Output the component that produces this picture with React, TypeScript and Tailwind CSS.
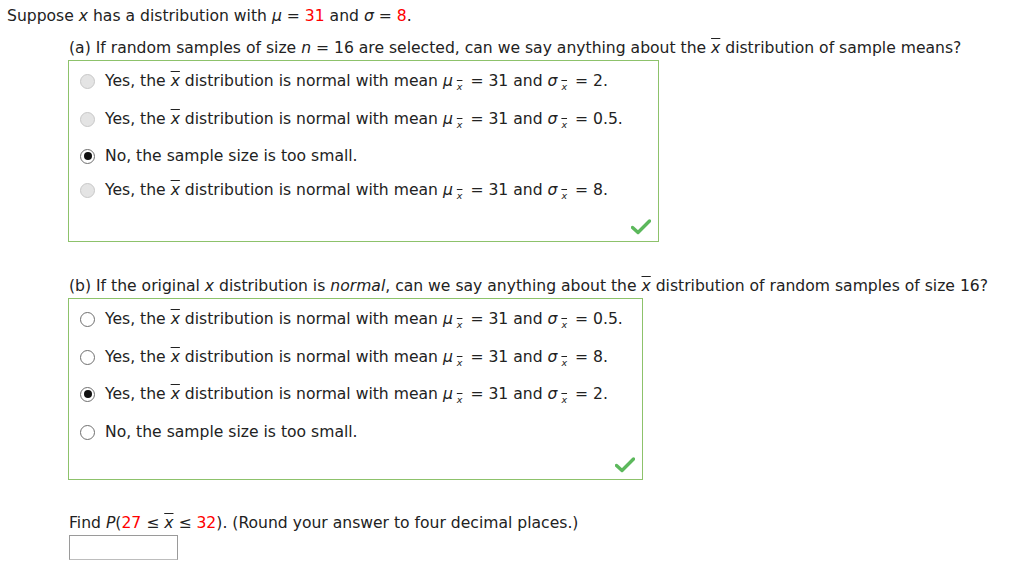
import React from "react";

const Red = ({ children }: { children: React.ReactNode }) => <span className="text-[#ff0000]">{children}</span>;

const XBar = () => <i className="overline decoration-1">x</i>;

const Sub = () => (
  <sub className="text-[9.5px] align-[-2px] ml-[4px] mr-[3px]">
    <i className="overline decoration-1">x</i>
  </sub>
);

const Mean = ({ s }: { s: string }) => (
  <>
    Yes, the <XBar /> distribution is normal with mean <i>μ</i>
    <Sub /> = 31 and <i>σ</i>
    <Sub /> = {s}.
  </>
);

const Radio = ({ checked, filled }: { checked?: boolean; filled?: boolean }) => (
  <span
    className={
      "inline-flex items-center justify-center w-[15px] h-[15px] rounded-full border shrink-0 " +
      (filled && !checked ? "bg-[#e4e4e4] border-[#c8c8c8]" : "bg-white border-[#6f6f6f]")
    }
  >
    {checked && <span className="w-[8px] h-[8px] rounded-full bg-[#111]" />}
  </span>
);

const Check = () => (
  <svg width="20" height="16" viewBox="0 0 20 16">
    <path d="M1.5 8.5 L7 13.5 L18.5 2" fill="none" stroke="#5cb85c" strokeWidth="3.4" strokeLinecap="round" strokeLinejoin="round" />
  </svg>
);

type Opt = { body: React.ReactNode; checked?: boolean };

const Box = ({ opts, filled, width, rowGaps }: { opts: Opt[]; filled?: boolean; width: string; rowGaps: string[] }) => (
  <div className={"border border-[#8dc26b] ml-[68px] relative h-[182px] " + width}>
    <div className="flex flex-col pt-[10px]">
      {opts.map((o, i) => (
        <div key={i} className={"flex items-center gap-[10px] pl-[11px] h-[20px] " + rowGaps[i]}>
          <Radio checked={o.checked} filled={filled} />
          <span className="whitespace-nowrap">{o.body}</span>
        </div>
      ))}
    </div>
    <div className="absolute right-[7px] bottom-[6px]">
      <Check />
    </div>
  </div>
);

export default function App() {
  return (
    <div className="bg-white w-[1024px] h-[567px] text-[#222] text-[15.6px] leading-[20px]" style={{ fontFamily: "'DejaVu Sans', Verdana, sans-serif" }}>
      <div className="pt-[6px] pl-[7px]">
        Suppose <i>x</i> has a distribution with <i>μ</i> = <Red>31</Red> and <i>σ</i> = <Red>8</Red>.
      </div>
      <div className="pl-[69px] pt-[12px] pb-[2px]">
        (a) If random samples of size <i>n</i> = 16 are selected, can we say anything about the <XBar /> distribution of sample means?
      </div>
      <Box
        filled
        width="w-[591px]"
        rowGaps={["mb-[18px]", "mb-[17px]", "mb-[14px]", ""]}
        opts={[
          { body: <Mean s="2" /> },
          { body: <Mean s="0.5" /> },
          { body: "No, the sample size is too small.", checked: true },
          { body: <Mean s="8" /> },
        ]}
      />
      <div className="pl-[69px] pt-[34px] pb-[2px]">
        (b) If the original <i>x</i> distribution is <i>normal</i>, can we say anything about the <XBar /> distribution of random samples of size 16?
      </div>
      <Box
        width="w-[575px]"
        rowGaps={["mb-[18px]", "mb-[17px]", "mb-[18px]", ""]}
        opts={[
          { body: <Mean s="0.5" /> },
          { body: <Mean s="8" /> },
          { body: <Mean s="2" />, checked: true },
          { body: "No, the sample size is too small." },
        ]}
      />
      <div className="pl-[69px] pt-[33px]">
        Find <i>P</i>(<Red>27</Red> ≤ <XBar /> ≤ <Red>32</Red>). (Round your answer to four decimal places.)
      </div>
      <div className="ml-[69px] mt-[2px] w-[109px] h-[25px] border border-[#9a9a9a] border-b-[#bdbdbd]" />
    </div>
  );
}
